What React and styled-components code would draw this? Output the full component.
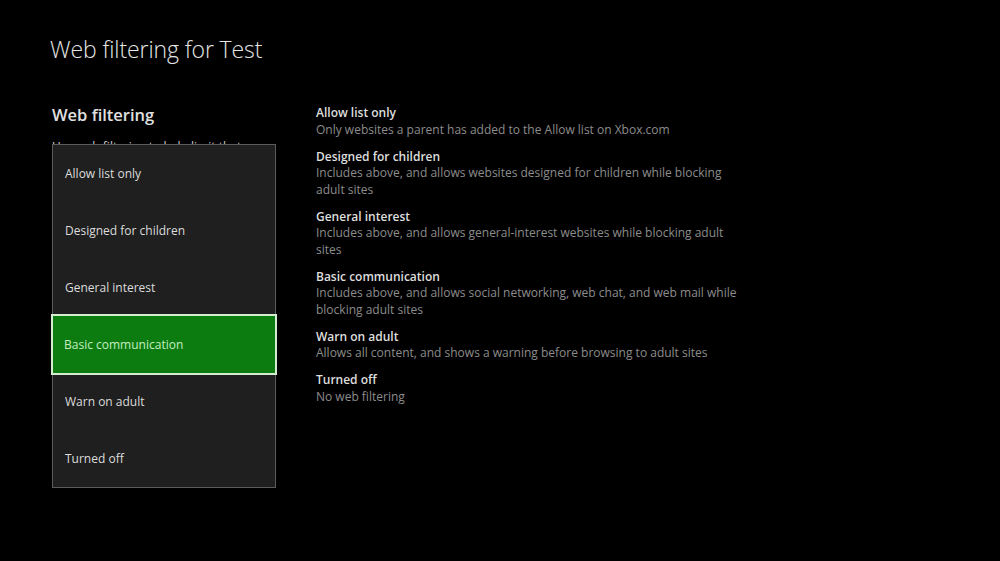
import React from "react";
import styled, { createGlobalStyle } from "styled-components";

const Global = createGlobalStyle`
  html, body { margin: 0; padding: 0; background: #000; }
  body { font-family: "Open Sans", "Noto Sans", sans-serif; color: #ddd; }
  #root { width: 1000px; height: 561px; overflow: hidden; }
`;

const Page = styled.div`
  width: 1000px;
  height: 561px;
  background: #000;
  box-sizing: border-box;
  padding: 33px 0 0 50px;
`;

const Title = styled.h1`
  margin: 0;
  font-size: 23px;
  font-weight: 300;
  color: #e6e6e6;
  letter-spacing: -0.1px;
  line-height: 32px;
`;

const Body = styled.div`
  display: flex;
  margin-top: 38px;
`;

const LeftCol = styled.div`
  position: relative;
  width: 264px;
  padding-left: 2px;
`;

const Heading = styled.h2`
  margin: 0;
  font-size: 16.5px;
  font-weight: 600;
  color: #e0e0e0;
  line-height: 24px;
`;

const Intro = styled.p`
  margin: 11px 0 0;
  font-size: 12px;
  line-height: 17px;
  color: #d0d0d0;
  width: 220px;
`;

const Menu = styled.ul`
  position: absolute;
  left: 2px;
  top: 41px;
  width: 224px;
  margin: 0;
  padding: 0;
  list-style: none;
  background: #1f1f1f;
  border: 1px solid #5c5c5c;
  box-sizing: border-box;
`;

const Item = styled.li`
  display: flex;
  align-items: center;
  box-sizing: border-box;
  position: relative;
  font-size: 12px;
  padding-left: ${(p) => (p.$active ? "11px" : "12px")};
  font-weight: ${(p) => (p.$active ? 400 : 500)};
  color: ${(p) => (p.$active ? "#c4ecc2" : "#dcdcdc")};
  background: ${(p) => (p.$active ? "#0d7c10" : "transparent")};
  border: ${(p) => (p.$active ? "2px solid #d4ecd2" : "none")};
  height: ${(p) => (p.$active ? "61px" : "57px")};
  margin: ${(p) => (p.$active ? "-2px -2px" : "0")};
`;

const RightCol = styled.div`
  width: 426px;
  padding-top: 2px;
  display: flex;
  flex-direction: column;
  gap: 10.5px;
`;

const Option = styled.div`
  font-size: 12px;
  line-height: 16.5px;
`;

const OptTitle = styled.div`
  color: #dedede;
  font-weight: 600;
`;

const OptDesc = styled.div`
  color: #8c8c8c;
`;

const options = [
  ["Allow list only", "Only websites a parent has added to the Allow list on Xbox.com"],
  ["Designed for children", "Includes above, and allows websites designed for children while blocking adult sites"],
  ["General interest", "Includes above, and allows general-interest websites while blocking adult sites"],
  ["Basic communication", "Includes above, and allows social networking, web chat, and web mail while blocking adult sites"],
  ["Warn on adult", "Allows all content, and shows a warning before browsing to adult sites"],
  ["Turned off", "No web filtering"],
];

export default function App() {
  return (
    <>
      <Global />
      <Page>
        <Title>Web filtering for Test</Title>
        <Body>
          <LeftCol>
            <Heading>Web filtering</Heading>
            <Intro>Use web filtering to help limit that content your child can see.</Intro>
            <Menu>
              {options.map(([t], i) => (
                <Item key={t} $active={i === 3}>{t}</Item>
              ))}
            </Menu>
          </LeftCol>
          <RightCol>
            {options.map(([t, d]) => (
              <Option key={t}>
                <OptTitle>{t}</OptTitle>
                <OptDesc>{d}</OptDesc>
              </Option>
            ))}
          </RightCol>
        </Body>
      </Page>
    </>
  );
}
